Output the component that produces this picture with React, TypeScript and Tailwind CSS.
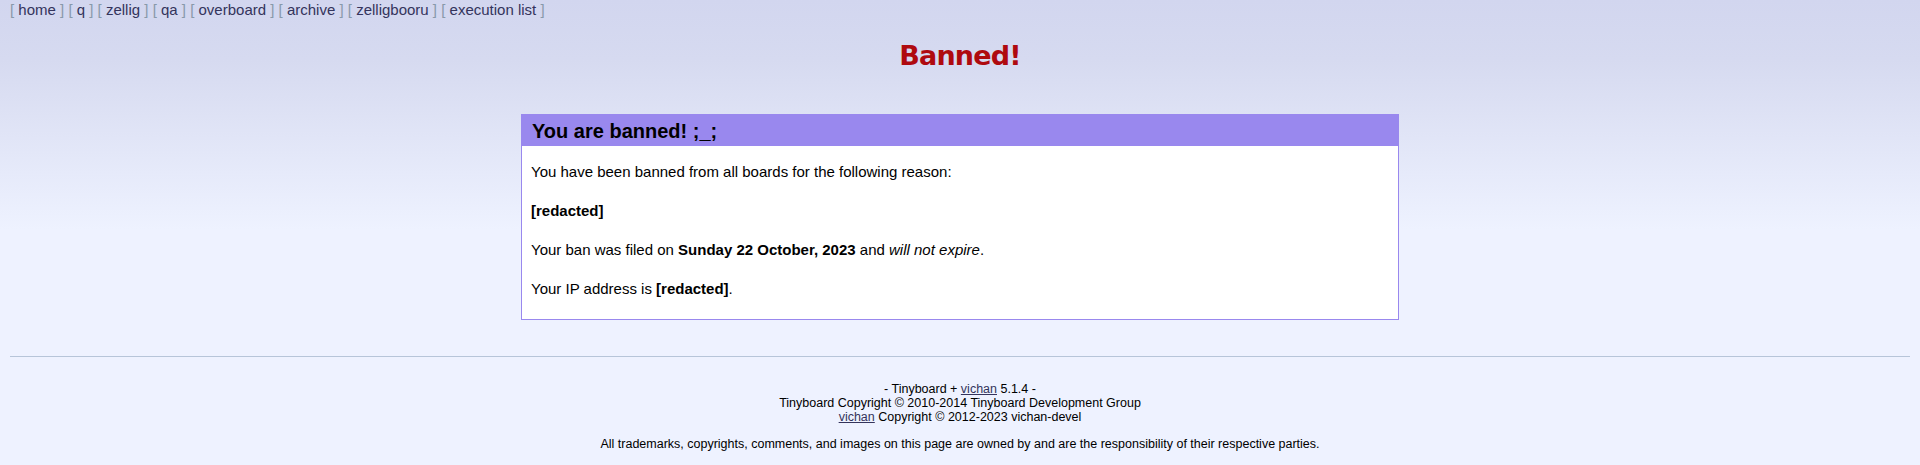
import React from "react";

const boards = ["home", "q", "zellig", "qa", "overboard", "archive", "zelligbooru", "execution list"];

function BoardList() {
  return (
    <div className="pl-[10px] pt-[1px] text-[15px] leading-[18px] text-[#8899aa]">
      {boards.map((b, i) => (
        <span key={b}>
          [ <a className="text-[#34345c] no-underline" href="#">{b}</a> ]
          {i < boards.length - 1 ? " " : ""}
        </span>
      ))}
    </div>
  );
}

function BanBox() {
  return (
    <div className="mx-auto w-[878px] border border-[#9988ee] bg-white">
      <h2 className="bg-[#9988ee] px-[10px] pt-[3px] h-[31px] text-[20px] font-bold leading-[26px] text-black">
        You are banned! ;_;
      </h2>
      <div className="flex flex-col gap-[22px] px-[9px] pt-[17px] pb-[22px] text-[15px] leading-[17px] text-black">
        <p>You have been banned from all boards for the following reason:</p>
        <p className="font-bold">[redacted]</p>
        <p>
          Your ban was filed on <b>Sunday 22 October, 2023</b> and <i>will not expire</i>.
        </p>
        <p>
          Your IP address is <b>[redacted]</b>.
        </p>
      </div>
    </div>
  );
}

function Footer() {
  return (
    <footer className="text-center text-[12.5px] leading-[14px] text-black">
      <p>
        - Tinyboard + <a href="#" className="text-[#34345c] underline">vichan</a> 5.1.4 -
        <br />
        Tinyboard Copyright © 2010-2014 Tinyboard Development Group
        <br />
        <a href="#" className="text-[#34345c] underline">vichan</a> Copyright © 2012-2023 vichan-devel
      </p>
      <p className="mt-[13px]">
        All trademarks, copyrights, comments, and images on this page are owned by and are the responsibility of their respective parties.
      </p>
    </footer>
  );
}

export default function App() {
  return (
    <div
      className="min-h-screen w-full bg-[linear-gradient(to_bottom,#d2d6ef_0px,#d6daf0_60px,#eef2ff_230px,#eef2ff_100%)] pb-4"
      style={{ fontFamily: '"Liberation Sans", Arial, sans-serif' }}
    >
      <BoardList />
      <h1
        className="mt-[21px] text-center text-[27px] font-bold leading-[32px] tracking-[-0.8px] text-[#af0a0f]"
        style={{ fontFamily: '"DejaVu Sans", Tahoma, sans-serif' }}
      >
        Banned!
      </h1>
      <div className="mt-[42px]">
        <BanBox />
      </div>
      <hr className="mx-[10px] mt-[36px] border-0 border-t border-[#b7c5d9]" />
      <div className="mt-[25px]">
        <Footer />
      </div>
    </div>
  );
}
